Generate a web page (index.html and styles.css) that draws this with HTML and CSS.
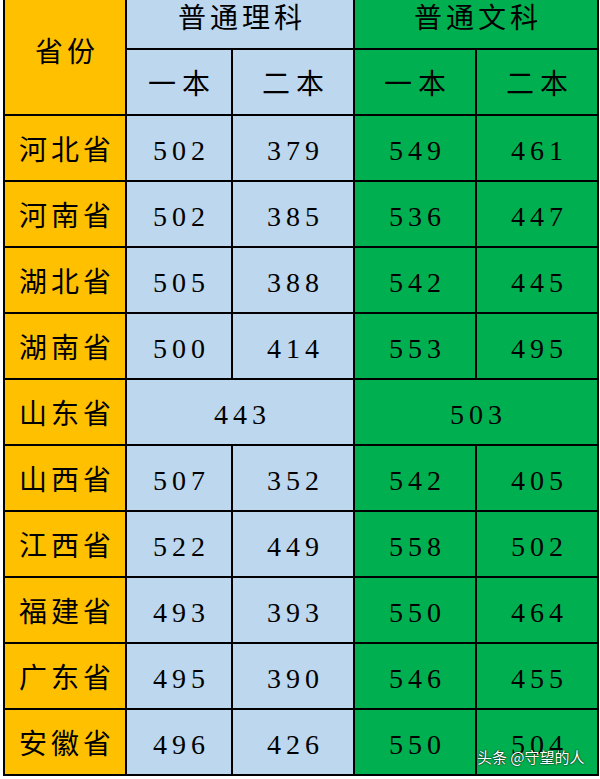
FILE: index.html
```html
<!DOCTYPE html>
<html lang="zh-CN">
<head>
<meta charset="utf-8">
<title>分数线</title>
<link rel="stylesheet" href="styles.css">
</head>
<body>
<div class="page">
  <div class="sheet">
    <div class="cell prov head span-r2">省份</div>
    <div class="cell sci head span-c2">普通理科</div>
    <div class="cell arts head span-c2">普通文科</div>
    <div class="cell sci head sub">一本</div>
    <div class="cell sci head sub">二本</div>
    <div class="cell arts head sub">一本</div>
    <div class="cell arts head sub">二本</div>

    <div class="cell prov name">河北省</div>
    <div class="cell sci num">502</div><div class="cell sci num">379</div>
    <div class="cell arts num">549</div><div class="cell arts num">461</div>

    <div class="cell prov name">河南省</div>
    <div class="cell sci num">502</div><div class="cell sci num">385</div>
    <div class="cell arts num">536</div><div class="cell arts num">447</div>

    <div class="cell prov name">湖北省</div>
    <div class="cell sci num">505</div><div class="cell sci num">388</div>
    <div class="cell arts num">542</div><div class="cell arts num">445</div>

    <div class="cell prov name">湖南省</div>
    <div class="cell sci num">500</div><div class="cell sci num">414</div>
    <div class="cell arts num">553</div><div class="cell arts num">495</div>

    <div class="cell prov name">山东省</div>
    <div class="cell sci num span-c2">443</div>
    <div class="cell arts num span-c2">503</div>

    <div class="cell prov name">山西省</div>
    <div class="cell sci num">507</div><div class="cell sci num">352</div>
    <div class="cell arts num">542</div><div class="cell arts num">405</div>

    <div class="cell prov name">江西省</div>
    <div class="cell sci num">522</div><div class="cell sci num">449</div>
    <div class="cell arts num">558</div><div class="cell arts num">502</div>

    <div class="cell prov name">福建省</div>
    <div class="cell sci num">493</div><div class="cell sci num">393</div>
    <div class="cell arts num">550</div><div class="cell arts num">464</div>

    <div class="cell prov name">广东省</div>
    <div class="cell sci num">495</div><div class="cell sci num">390</div>
    <div class="cell arts num">546</div><div class="cell arts num">455</div>

    <div class="cell prov name">安徽省</div>
    <div class="cell sci num">496</div><div class="cell sci num">426</div>
    <div class="cell arts num">550</div><div class="cell arts num">504</div>
  </div>
  <div class="watermark">头条 @守望的人</div>
</div>
</body>
</html>
```
FILE: styles.css
```css
html, body {
  margin: 0;
  padding: 0;
  background: #ffffff;
}
body {
  width: 600px;
  height: 779px;
  overflow: hidden;
}
.page {
  position: relative;
  width: 600px;
  height: 779px;
  overflow: hidden;
}
.sheet {
  display: grid;
  grid-template-columns: 120px 104px 120px 120px 120px;
  grid-auto-rows: 64px;
  gap: 2px;
  padding: 2px;
  background: #000000;
  width: max-content;
  margin-left: 3px;
  margin-top: -18px;
}
.cell {
  display: flex;
  align-items: center;
  justify-content: center;
  color: #000000;
  white-space: nowrap;
}
.prov { background: #ffc000; }
.sci { background: #bdd7ee; }
.arts { background: #00b050; }
.span-r2 { grid-row: span 2; }
.span-c2 { grid-column: span 2; }

.head, .name {
  font-family: "Noto Sans CJK SC", sans-serif;
  font-size: 28px;
  letter-spacing: 4px;
  text-indent: 4px;
}
.prov.head {
  padding-top: 2px;
}
.sub {
  letter-spacing: 6px;
  text-indent: 6px;
}
.num {
  font-family: "Liberation Serif", serif;
  font-size: 28px;
  letter-spacing: 5px;
  text-indent: 5px;
  padding-top: 5px;
  box-sizing: border-box;
}
.watermark {
  position: absolute;
  left: 477px;
  top: 746px;
  font-family: "Noto Sans CJK SC", sans-serif;
  font-size: 15px;
  color: #ffffff;
  text-shadow: 0 0 2px rgba(0, 0, 0, 0.85), 0 0 1px rgba(0, 0, 0, 0.9);
  white-space: nowrap;
}
```
